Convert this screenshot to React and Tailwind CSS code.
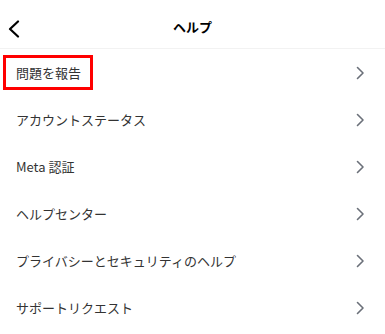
import React from "react";

const items = [
  "問題を報告",
  "アカウントステータス",
  "Meta 認証",
  "ヘルプセンター",
  "プライバシーとセキュリティのヘルプ",
  "サポートリクエスト",
];

const Chevron = () => (
  <svg width="9" height="14" viewBox="0 0 9 14" fill="none">
    <path d="M1.5 1.5 L7 7 L1.5 12.5" stroke="#6b7079" strokeWidth="1.6" strokeLinecap="round" strokeLinejoin="round" />
  </svg>
);

const App = () => {
  return (
    <div
      className="w-[385px] h-[334px] bg-white overflow-hidden text-[#262626]"
      style={{ fontFamily: '"Noto Sans CJK JP", "Noto Sans", sans-serif' }}
    >
      {/* Header */}
      <div className="relative h-[49px] flex items-center justify-center border-b border-[#f2f2f2]">
        <button className="absolute left-[7px] top-[20px]">
          <svg width="14" height="18" viewBox="0 0 14 18" fill="none">
            <path d="M11 1.5 L3 9 L11 16.5" stroke="#000" strokeWidth="2.2" strokeLinecap="round" strokeLinejoin="round" />
          </svg>
        </button>
        <h1 className="text-[13px] font-semibold text-black mt-[6px]">ヘルプ</h1>
      </div>

      {/* List */}
      <ul>
        {items.map((label, idx) => (
          <li key={idx} className="h-[47px] flex items-center justify-between pr-[20px]">
            {idx === 0 ? (
              <span className="ml-[3px] pl-[10px] pr-[9px] h-[35px] flex items-center border-[3px] border-[#ff0000] text-[13px] text-[#333]">
                {label}
              </span>
            ) : (
              <span className="ml-[16px] text-[13px] text-[#333]">{label}</span>
            )}
            <Chevron />
          </li>
        ))}
      </ul>
    </div>
  );
};

export default App;
